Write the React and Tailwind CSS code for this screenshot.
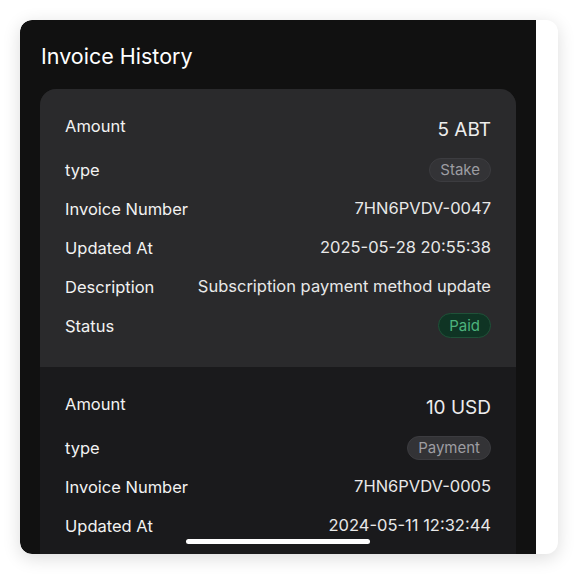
import React from "react";

const invoices = [
  {
    amount: "5 ABT",
    type: "Stake",
    number: "7HN6PVDV-0047",
    updatedAt: "2025-05-28 20:55:38",
  },
  {
    amount: "10 USD",
    type: "Payment",
    number: "7HN6PVDV-0005",
    updatedAt: "2024-05-11 12:32:44",
  },
];

function Row({ label, children }) {
  return (
    <div className="flex h-[39px] items-center justify-between">
      <span className="leading-[22px] text-[#f2f2f2]">{label}</span>
      {children}
    </div>
  );
}

function InvoiceItem({ inv, active }) {
  return (
    <div className={`px-[25px] pt-[26px] pb-[22px] ${active ? "bg-[#2a2a2c]" : "bg-[#1a1a1c]"}`}>
      <div className="flex h-[35px] items-start justify-between">
        <span className="leading-[22px] text-[#f2f2f2]">Amount</span>
        <span className="text-[19px] leading-[30px] text-[#ededed]">{inv.amount}</span>
      </div>
      <Row label="type">
        <span className="rounded-full border border-[#3c3c40] bg-[#333336] px-[10px] text-[15px] leading-[22px] text-[#9d9da2]">
          {inv.type}
        </span>
      </Row>
      <Row label="Invoice Number">
        <span className="text-[#e8e8e8]">{inv.number}</span>
      </Row>
      <Row label="Updated At">
        <span className="text-[#e8e8e8]">{inv.updatedAt}</span>
      </Row>
      {inv.description && (
        <Row label="Description">
          <span className="text-[#e8e8e8]">{inv.description}</span>
        </Row>
      )}
      {inv.status && (
        <Row label="Status">
          <span className="rounded-full border border-[#1f5138] bg-[#0f3424] px-[10px] text-[15px] leading-[23px] text-[#4cb27c]">
            {inv.status}
          </span>
        </Row>
      )}
    </div>
  );
}

export default function App() {
  const list = [
    { ...invoices[0], description: "Subscription payment method update", status: "Paid" },
    invoices[1],
  ];

  return (
    <div
      className="min-h-[574px] bg-white pt-5 pl-5"
      style={{ fontFamily: "Inter, 'Noto Sans', sans-serif" }}
    >
      <div className="flex h-[534px] w-[538px] overflow-hidden rounded-xl bg-white shadow-[0_4px_18px_rgba(0,0,0,0.14)]">
        <div className="relative flex w-[516px] flex-col overflow-hidden rounded-l-xl bg-[#111111] px-5 pt-[22px]">
          <h2 className="pl-px text-[21.5px] leading-[29px] text-white">Invoice History</h2>
          <div className="mt-[18px] flex-1 overflow-hidden rounded-t-2xl bg-[#1a1a1c] text-[16.5px]">
            {list.map((inv, i) => (
              <InvoiceItem key={inv.number} inv={inv} active={i === 0} />
            ))}
          </div>
          {/* home indicator */}
          <div className="absolute bottom-[10px] left-[166px] h-[5px] w-[184px] rounded-full bg-white" />
        </div>
      </div>
    </div>
  );
}
